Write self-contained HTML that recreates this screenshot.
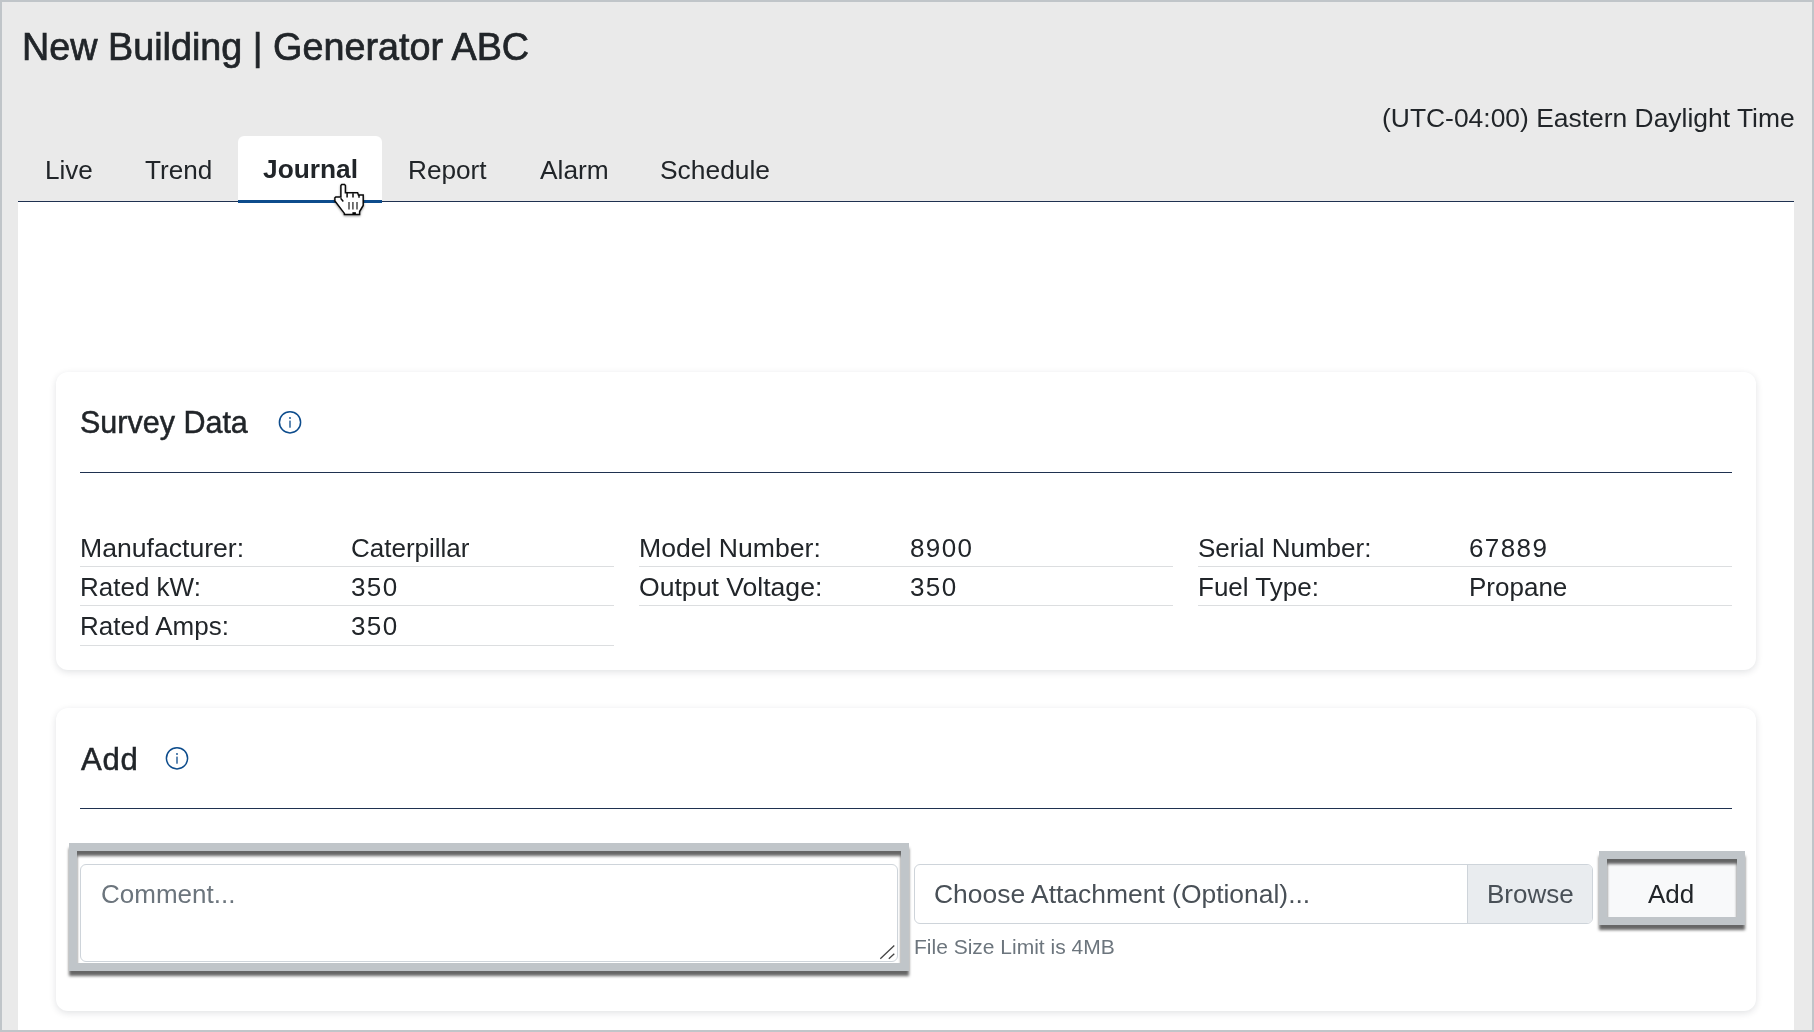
<!DOCTYPE html>
<html>
<head>
<meta charset="utf-8">
<style>
html,body{margin:0;padding:0;}
body{width:1814px;height:1032px;position:relative;overflow:hidden;background:#c0c5c9;font-family:"Liberation Sans",sans-serif;color:#212529;}
#frame{position:absolute;left:2px;top:2px;width:1810px;height:1028px;background:#eaeaea;}
.t{position:absolute;line-height:1;white-space:nowrap;will-change:transform;}
#content{position:absolute;left:18px;top:202px;width:1776px;height:828px;background:#fff;}
#navline{position:absolute;left:18px;top:201px;width:1776px;height:1px;background:#1f3150;}
#tab{position:absolute;left:238px;top:136px;width:144px;height:64px;background:#fff;border-radius:6px 6px 0 0;}
#tabline{position:absolute;left:238px;top:200px;width:144px;height:3px;background:#0d4c8c;}
.card{position:absolute;left:56px;width:1700px;background:#fff;border-radius:12px;box-shadow:0 2px 7px rgba(20,30,50,0.13);}
.hr{position:absolute;left:80px;width:1652px;height:1px;background:#1f3150;}
.sep{position:absolute;height:1px;background:#dcdee0;width:534px;}
.info{position:absolute;}
</style>
</head>
<body>
<div id="frame"></div>
<div class="t" style="left:22px;top:28px;font-size:37.75px;-webkit-text-stroke:0.7px #212529;transform:scaleY(1.04);transform-origin:0 4.5px;">New Building | Generator ABC</div>
<div class="t" style="right:19px;top:105px;font-size:26.43px;">(UTC-04:00) Eastern Daylight Time</div>
<div id="tab"></div>
<div id="content"></div>
<div id="navline"></div>
<div id="tabline"></div>
<div class="t" style="left:45px;top:157px;font-size:26.1px;">Live</div>
<div class="t" style="left:145px;top:157px;font-size:26.1px;">Trend</div>
<div class="t" style="left:263px;top:156px;font-size:26.3px;font-weight:bold;">Journal</div>
<div class="t" style="left:408px;top:157px;font-size:26.2px;">Report</div>
<div class="t" style="left:540px;top:157px;font-size:26.3px;">Alarm</div>
<div class="t" style="left:660px;top:157px;font-size:26.4px;">Schedule</div>
<svg style="position:absolute;left:330px;top:180px;filter:drop-shadow(0 1.2px 1px rgba(0,0,0,0.4));" width="40" height="40" viewBox="0 0 40 40">
<path d="M10.9 5.6 L11.8 4.6 L14.5 4.6 L15.4 5.6 L15.4 12.8 L27.6 12.8 L28.4 14.9 L33.2 14.9 L33.2 25.5 L29.6 31.5 L29.6 34.6 L14.4 34.6 L14.4 33.4 L4.9 21 L4.9 17.8 L5.8 16.9 L10.9 16.9 Z" fill="#fff" stroke="#0a0a0a" stroke-width="1.5" stroke-linejoin="miter"/>
<path d="M10.6 18.3 L13.3 21.4 M17.1 12.8 L17.1 17.6 M23 13.2 L23 17.6 M29 14.9 L29 17.7" stroke="#0a0a0a" stroke-width="1.5" fill="none"/>
<path d="M19 22 L19 29.6 M22.9 22 L22.9 29.6 M27 22 L27 29.6" stroke="#555" stroke-width="1.6" fill="none"/>
<rect x="22.4" y="32.2" width="3.5" height="2" fill="#000"/>
</svg>
<!-- card 1 -->
<div class="card" style="top:372px;height:298px;"></div>
<div class="t" style="left:80px;top:407px;font-size:30.5px;-webkit-text-stroke:0.5px #212529;">Survey Data</div>
<svg class="info" style="left:278px;top:410px;" width="24" height="24" viewBox="0 0 24 24"><circle cx="12" cy="12.3" r="10.6" fill="none" stroke="#0d4c8c" stroke-width="1.5"/><rect x="11.35" y="10.6" width="1.3" height="7.1" fill="#0d4c8c"/><circle cx="12" cy="8" r="0.9" fill="#0d4c8c"/></svg>
<div class="hr" style="top:472px;"></div>

<div class="sep" style="left:80px;top:566px;"></div>
<div class="sep" style="left:80px;top:605px;"></div>
<div class="sep" style="left:80px;top:645px;"></div>
<div class="sep" style="left:639px;top:566px;"></div>
<div class="sep" style="left:639px;top:605px;"></div>
<div class="sep" style="left:1198px;top:566px;"></div>
<div class="sep" style="left:1198px;top:605px;"></div>

<div class="t" style="left:80px;top:535px;font-size:26.6px;">Manufacturer:</div>
<div class="t" style="left:351px;top:535px;font-size:26px;">Caterpillar</div>
<div class="t" style="left:80px;top:574px;font-size:26px;">Rated kW:</div>
<div class="t" style="left:351px;top:574px;font-size:26px;letter-spacing:1.4px;">350</div>
<div class="t" style="left:80px;top:613px;font-size:26px;">Rated Amps:</div>
<div class="t" style="left:351px;top:613px;font-size:26px;letter-spacing:1.4px;">350</div>

<div class="t" style="left:639px;top:535px;font-size:26.6px;">Model Number:</div>
<div class="t" style="left:910px;top:535px;font-size:26px;letter-spacing:1.4px;">8900</div>
<div class="t" style="left:639px;top:574px;font-size:26.6px;">Output Voltage:</div>
<div class="t" style="left:910px;top:574px;font-size:26px;letter-spacing:1.4px;">350</div>

<div class="t" style="left:1198px;top:535px;font-size:26px;">Serial Number:</div>
<div class="t" style="left:1469px;top:535px;font-size:26px;letter-spacing:1.4px;">67889</div>
<div class="t" style="left:1198px;top:574px;font-size:26px;">Fuel Type:</div>
<div class="t" style="left:1469px;top:574px;font-size:26px;">Propane</div>

<!-- card 2 -->
<div class="card" style="top:708px;height:303px;"></div>
<div class="t" style="left:81px;top:744px;font-size:31.1px;letter-spacing:0.7px;-webkit-text-stroke:0.5px #212529;">Add</div>
<svg class="info" style="left:165px;top:746px;" width="24" height="24" viewBox="0 0 24 24"><circle cx="12" cy="12.3" r="10.6" fill="none" stroke="#0d4c8c" stroke-width="1.5"/><rect x="11.35" y="10.6" width="1.3" height="7.1" fill="#0d4c8c"/><circle cx="12" cy="8" r="0.9" fill="#0d4c8c"/></svg>
<div class="hr" style="top:808px;"></div>

<div id="ta" style="position:absolute;left:80px;top:864px;width:818px;height:98px;box-sizing:border-box;border:1px solid #ced4da;border-radius:6px;background:#fff;"></div>
<div class="t" style="left:101px;top:881px;font-size:26px;color:#6c757d;">Comment...</div>
<svg style="position:absolute;left:877px;top:940px;" width="20" height="20" viewBox="0 0 20 20"><path d="M3.3 18.7 L17.3 5.5 M11.8 18.7 L17.3 13.7" stroke="#444" stroke-width="1.3" fill="none"/></svg>

<div style="position:absolute;left:914px;top:864px;width:679px;height:60px;box-sizing:border-box;border:1px solid #ced4da;border-radius:6px;background:#fff;overflow:hidden;">
  <div style="position:absolute;left:552px;top:0;width:126px;height:58px;background:#e9ecef;border-left:1px solid #ced4da;"></div>
</div>
<div class="t" style="left:934px;top:881px;font-size:26.45px;color:#495057;">Choose Attachment (Optional)...</div>
<div class="t" style="left:1487px;top:881px;font-size:26px;color:#495057;">Browse</div>
<div class="t" style="left:914px;top:936px;font-size:21px;color:#6c757d;">File Size Limit is 4MB</div>

<div style="position:absolute;left:1599px;top:851px;width:146px;height:74px;background:#f8f9fa;"></div>
<div class="t" style="left:1648px;top:881px;font-size:26px;color:#212529;">Add</div>

<div style="position:absolute;left:69px;top:843px;width:840px;height:128px;box-sizing:border-box;border:8px solid #c0c5c9;filter:drop-shadow(0 5px 1.5px rgba(0,0,0,0.6));"></div>
<div style="position:absolute;left:1599px;top:851px;width:146px;height:74px;box-sizing:border-box;border:8px solid #c0c5c9;filter:drop-shadow(0 5px 1.5px rgba(0,0,0,0.6));"></div>

</body>
</html>
